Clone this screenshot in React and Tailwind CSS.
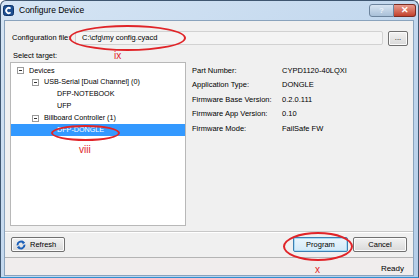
import React from 'react'

const font = { fontFamily: '"Liberation Sans", Arial, sans-serif' }

function AppIcon() {
  return (
    <svg width="11" height="11" viewBox="0 0 11 11">
      <rect x="0.5" y="0.5" width="10" height="10" rx="2" fill="#1d4f91" stroke="#0f3468" />
      <path d="M7.6 3.6 A2.6 2.6 0 1 0 7.6 7.4" fill="none" stroke="#fff" strokeWidth="1.8" />
    </svg>
  )
}

function RefreshIcon() {
  return (
    <svg width="10" height="10" viewBox="0 0 10 10">
      <path d="M1.6 5.4 A3.4 3.4 0 0 1 7.4 2.6" fill="none" stroke="#1b5fb8" strokeWidth="1.9" />
      <path d="M6.2 0.6 L9.2 2.4 L6.6 4.4 Z" fill="#1b5fb8" />
      <path d="M8.4 4.6 A3.4 3.4 0 0 1 2.6 7.4" fill="none" stroke="#1b5fb8" strokeWidth="1.9" />
      <path d="M3.8 9.4 L0.8 7.6 L3.4 5.6 Z" fill="#1b5fb8" />
    </svg>
  )
}

function Expander() {
  return (
    <span className="w-[7px] h-[7px] border border-[#9a9a9a] bg-white flex items-center justify-center shrink-0">
      <span className="w-[3px] h-px bg-[#333]" />
    </span>
  )
}

function WinButton({ children, primary, className = '' }) {
  return (
    <div
      className={
        'h-[15px] rounded-[2px] border flex items-center justify-center text-[7.5px] text-black ' +
        (primary
          ? 'border-[#3c7fb1] bg-gradient-to-b from-[#eaf6fd] to-[#d2e9f7] shadow-[inset_0_0_0_1px_#a8dbf5] '
          : 'border-[#707070] bg-gradient-to-b from-[#f2f2f2] to-[#d9d9d9] shadow-[inset_0_0_0_1px_#fbfbfb] ') +
        className
      }
    >
      {children}
    </div>
  )
}

const treeRows = [
  { label: 'Devices', level: 0, exp: true },
  { label: 'USB-Serial [Dual Channel] (0)', level: 1, exp: true },
  { label: 'DFP-NOTEBOOK', level: 2 },
  { label: 'UFP', level: 2 },
  { label: 'Billboard Controller (1)', level: 1, exp: true },
  { label: 'DFP-DONGLE', level: 2, selected: true },
]

const info = [
  ['Part Number:', 'CYPD1120-40LQXI'],
  ['Application Type:', 'DONGLE'],
  ['Firmware Base Version:', '0.2.0.111'],
  ['Firmware App Version:', '0.10'],
  ['Firmware Mode:', 'FailSafe FW'],
]

export default function App() {
  return (
    <div
      className="relative w-[419px] h-[278px] flex flex-col overflow-hidden rounded-t-[6px] border border-[#3f5670] border-b-[#2f8fd0] bg-gradient-to-br from-[#d6e5f4] via-[#c3d8ee] to-[#b4cde8]"
      style={font}
    >
      {/* title bar */}
      <div className="h-[19px] flex items-center pl-[2px] pr-[2px] shrink-0">
        <AppIcon />
        <span className="ml-[5px] text-[8.5px] text-black">Configure Device</span>
        <div className="ml-auto flex self-start mt-[3px]">
          <div className="w-[25px] h-[13px] rounded-l-[3px] border border-[#6d849d] bg-gradient-to-b from-[#d8e5f2] to-[#a9c0d8] flex items-center justify-center text-[8px] font-bold text-[#e9f1f9]">
            ?
          </div>
          <div className="w-[22px] h-[13px] rounded-r-[3px] border border-l-0 border-[#7a2c22] bg-gradient-to-b from-[#e89a8c] to-[#c2402b] flex items-center justify-center text-[9px] font-bold text-white">
            ✕
          </div>
        </div>
      </div>

      {/* client area */}
      <div className="flex-1 ml-[3px] mr-[4px] mb-[2px] border border-[#8aa3bd] bg-[#f0f0f0] flex flex-col">
        {/* config file row */}
        <div className="mt-[10px] h-[14px] flex items-center pl-[7px] pr-[5px]">
          <span className="text-[7.5px] text-black w-[63px]">Configuration file:</span>
          <div className="flex-1 h-[14px] rounded-[2px] border border-[#d2d2d2] bg-[#f4f4f4] flex items-center pl-[6px] text-[7.5px] text-black">
            C:\cfg\my config.cyacd
          </div>
          <WinButton className="ml-[5px] w-[20px] h-[13px] text-[#555]">...</WinButton>
        </div>

        <div className="mt-[6px] h-[10px] pl-[8px] flex items-center text-[7.5px] text-black">Select target:</div>

        {/* tree + info */}
        <div className="mt-[1px] h-[164px] flex pl-[5px]">
          <div className="w-[176px] border border-[#b8b8b8] bg-white pt-[2px]">
            {treeRows.map((r) => (
              <div
                key={r.label}
                className={
                  'h-[11.9px] flex items-center text-[7.2px] ' +
                  (r.selected ? 'bg-[#3399ff] text-white' : 'text-black')
                }
              >
                <div
                  className={
                    'flex items-center ' +
                    (r.level === 0 ? 'pl-[6px]' : r.level === 1 ? 'pl-[21px]' : 'pl-[46px]')
                  }
                >
                  {r.exp && <Expander />}
                  <span className={r.exp ? 'ml-[5px]' : ''}>{r.label}</span>
                </div>
              </div>
            ))}
          </div>
          <div className="flex-1 pl-[6px] pt-[1px]">
            {info.map(([k, v]) => (
              <div key={k} className="h-[14.6px] flex items-center text-[7.5px] text-black">
                <span className="w-[90px]">{k}</span>
                <span>{v}</span>
              </div>
            ))}
          </div>
        </div>

        {/* separator */}
        <div className="mt-[5px] border-t border-[#c8c8c8] border-b border-b-white" />

        {/* buttons */}
        <div className="mt-[4px] flex items-center pl-[6px] pr-[6px]">
          <WinButton className="w-[54px] justify-start pl-[4px]">
            <RefreshIcon />
            <span className="ml-[4px]">Refresh</span>
          </WinButton>
          <WinButton primary className="ml-auto w-[55px]">
            Program
          </WinButton>
          <WinButton className="ml-[5px] w-[54px]">Cancel</WinButton>
        </div>

        <div className="mt-[5px] border-t border-[#b4b4b4]" />

        {/* status bar */}
        <div className="flex-1 bg-[#f0eded] flex items-center justify-end pr-[9px] pt-[5px] text-[8px] text-black">
          Ready
        </div>
      </div>

      {/* annotations */}
      <div className="absolute left-[68px] top-[24px] w-[117px] h-[26px] rounded-[50%] border-2 border-[#e02428]" />
      <div className="absolute left-[113px] top-[49px] text-[10px] leading-[12px] text-[#e02428]">ix</div>
      <div className="absolute left-[50px] top-[124px] w-[69px] h-[16px] rounded-[50%] border-2 border-[#e02428]" />
      <div className="absolute left-[78px] top-[143px] text-[10px] leading-[12px] text-[#e02428]">viii</div>
      <div className="absolute left-[282px] top-[231px] w-[70px] h-[29px] rounded-[50%] border-2 border-[#e02428]" />
      <div className="absolute left-[314px] top-[263px] text-[10px] leading-[12px] text-[#e02428]">x</div>
    </div>
  )
}
